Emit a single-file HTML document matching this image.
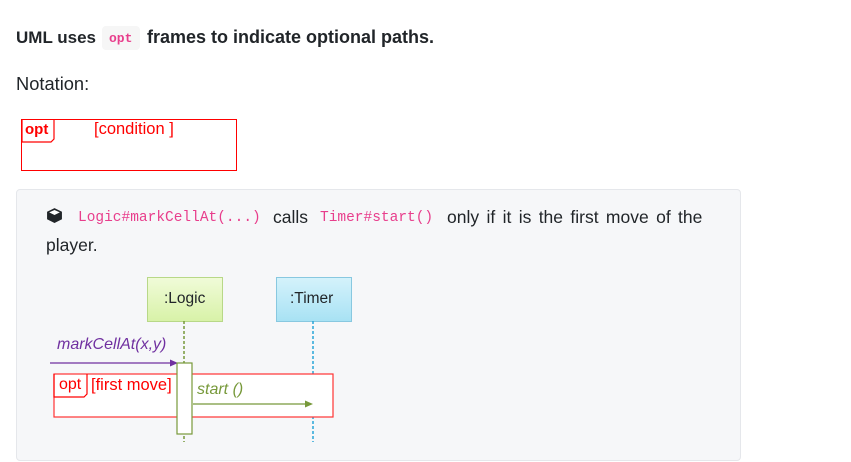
<!DOCTYPE html>
<html><head><style>
body{margin:0;width:851px;height:462px;background:#fff;font-family:"Liberation Sans",sans-serif;color:#212529;position:relative;overflow:hidden}
.a{position:absolute;white-space:nowrap}
.code{font-family:"Liberation Mono",monospace;color:#e83e8c;font-size:14.5px}
</style></head><body>
<div class="a" style="left:16px;top:28px;font-size:17px;font-weight:bold">UML uses</div>
<div class="a" style="left:102px;top:26px;width:38px;height:24px;background:#f6f6f6;border-radius:4px"></div>
<div class="a code" style="left:109px;top:31px;font-weight:bold;font-size:13px">opt</div>
<div class="a" style="left:147px;top:27px;font-size:18px;font-weight:bold">frames to indicate optional paths.</div>
<div class="a" style="left:16px;top:73px;font-size:18.3px">Notation:</div>
<div class="a" style="left:21px;top:119px;width:214px;height:50px;border:1.5px solid #f00"></div>
<svg class="a" style="left:21px;top:119px" width="40" height="24"><path d="M1 1 V23 H30 L33 20 V1" fill="none" stroke="#f00" stroke-width="1.2"/></svg>
<div class="a" style="left:25px;top:121px;font-size:15px;font-weight:bold;color:#f00">opt</div>
<div class="a" style="left:94px;top:120px;font-size:16.5px;color:#f00">[condition ]</div>

<div class="a" style="left:16px;top:189px;width:723px;height:270px;background:#f6f7f9;border:1px solid #e5e7eb;border-radius:4px"></div>
<svg class="a" style="left:46px;top:207px" width="17" height="17" viewBox="0 0 16 16"><path d="M8 1 L15 4.5 V11.5 L8 15 L1 11.5 V4.5 Z" fill="#212529"/><path d="M3 5 L8 7.5 L13 5 L8 2.8 Z" fill="#fff"/></svg>
<div class="a code" style="left:78px;top:210px">Logic#markCellAt(...)</div>
<div class="a" style="left:273px;top:207px;font-size:17.5px">calls</div>
<div class="a code" style="left:320px;top:210px">Timer#start()</div>
<div class="a" style="left:447px;top:207px;font-size:17.5px;word-spacing:2.5px">only if it is the first move of the</div>
<div class="a" style="left:46px;top:235px;font-size:17.5px">player.</div>

<div class="a" style="left:147px;top:277px;width:74px;height:43px;background:linear-gradient(#f0fbd8,#d8f2a8);border:1px solid #b8d888"></div>
<div class="a" style="left:164px;top:290px;font-size:15.5px">:Logic</div>
<div class="a" style="left:276px;top:277px;width:74px;height:43px;background:linear-gradient(#d4f2fb,#a8e2f4);border:1px solid #88c8e0"></div>
<div class="a" style="left:290px;top:290px;font-size:15.5px">:Timer</div>
<svg class="a" style="left:0;top:0" width="851" height="462">
<line x1="184" y1="321" x2="184" y2="442" stroke="#77993a" stroke-width="1.5" stroke-dasharray="3,2"/>
<line x1="313" y1="321" x2="313" y2="442" stroke="#29a6d8" stroke-width="1.5" stroke-dasharray="3,2"/>
<rect x="54" y="374" width="279" height="43" fill="#fff" stroke="#f33" stroke-width="1.2"/>
<path d="M54 374 V397 H84 L87 394 V374" fill="none" stroke="#f00" stroke-width="1.2"/>
<line x1="50" y1="363" x2="174" y2="363" stroke="#7030a0" stroke-width="1.2"/>
<path d="M178 363 L170 359.5 V366.5Z" fill="#7030a0"/>
<rect x="177" y="363" width="15" height="71" fill="#fff" stroke="#77993a" stroke-width="1.2"/>
<line x1="193" y1="404" x2="308" y2="404" stroke="#77993a" stroke-width="1.2"/>
<path d="M313 404 L305 400.5 V407.5Z" fill="#77993a"/>
</svg>
<div class="a" style="left:57px;top:336px;font-size:16px;font-style:italic;color:#7030a0">markCellAt(x,y)</div>
<div class="a" style="left:59px;top:376px;font-size:16px;color:#f00">opt</div>
<div class="a" style="left:91px;top:376px;font-size:16.5px;color:#f00">[first move]</div>
<div class="a" style="left:197px;top:381px;font-size:16px;font-style:italic;color:#77993a">start ()</div>
</body></html>
